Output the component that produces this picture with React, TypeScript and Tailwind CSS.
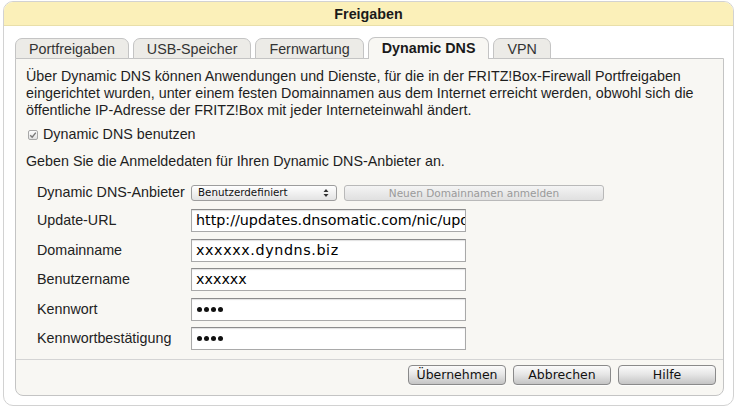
import React from "react";

const sans = { fontFamily: '"Liberation Sans", Arial, Helvetica, sans-serif' };
const lucida = { fontFamily: '"DejaVu Sans", Verdana, sans-serif' };

function Tab({ label, active }: { label: string; active?: boolean }) {
  return (
    <div
      className={
        active
          ? "relative z-10 h-[22px] px-[13px] border border-b-0 border-[#c4c4c4] rounded-t-[7px] bg-[#f8f7f3] text-[14.3px] leading-[21px] font-bold text-[#1a1a1a]"
          : "h-[21px] px-[13px] border border-[#c4c4c4] rounded-t-[7px] bg-[#ecebe7] text-[14.3px] leading-[20px] text-[#333]"
      }
    >
      {label}
    </div>
  );
}

function Row({ label, children }: { label: string; children: React.ReactNode }) {
  return (
    <div className="flex items-center">
      <div className="w-[154px] text-[14.3px] text-[#222]">{label}</div>
      {children}
    </div>
  );
}

function TextInput({ children }: { children: React.ReactNode }) {
  return (
    <div
      className="w-[275px] h-[23px] border border-[#a9a9a9] border-t-[#8c8c8c] bg-white shadow-[inset_0_1px_1px_rgba(0,0,0,0.12)] overflow-hidden whitespace-nowrap pl-[4px] text-[14.3px] leading-[21px] text-black"
      style={lucida}
    >
      {children}
    </div>
  );
}

function Dots() {
  return (
    <div className="w-[275px] h-[23px] border border-[#a9a9a9] border-t-[#8c8c8c] bg-white shadow-[inset_0_1px_1px_rgba(0,0,0,0.12)] flex items-center gap-[2px] pl-[5px]">
      {[0, 1, 2, 3].map((i) => (
        <span key={i} className="w-[5px] h-[5px] rounded-full bg-[#111]" />
      ))}
    </div>
  );
}

function Btn({ label }: { label: string }) {
  return (
    <div
      className="w-[98px] h-[20px] border border-[#8a8a8a] rounded-[4px] bg-gradient-to-b from-[#fbfbfb] via-[#e4e4e4] to-[#c4c4c4] text-center text-[12.5px] leading-[18px] text-[#111] shadow-[0_1px_0_rgba(255,255,255,0.8)]"
      style={lucida}
    >
      {label}
    </div>
  );
}

export default function App() {
  return (
    <div className="w-[737px] h-[411px] bg-white pt-[1px] pl-[3px]" style={sans}>
      <div className="w-[731px] h-[405px] border border-[#d2d2d2] rounded-[10px] overflow-hidden bg-white">
        <div className="h-[24px] bg-[#fbf0b9] border-b border-[#e9dfa9] text-center text-[14.3px] leading-[24px] font-bold text-[#1a1a1a]">
          Freigaben
        </div>
        <div className="pl-[11px] pr-[9px] pt-[11px]">
          <div className="flex items-end gap-[4px] -mb-px">
            <Tab label="Portfreigaben" />
            <Tab label="USB-Speicher" />
            <Tab label="Fernwartung" />
            <Tab label="Dynamic DNS" active />
            <Tab label="VPN" />
          </div>
          <div className="h-[338px] border border-[#c4c4c4] rounded-b-[8px] bg-[#f8f7f3] flex flex-col">
            <div className="px-[10px] pt-[9px]">
              <p className="text-[14.3px] leading-[17px] text-[#1e1e1e] whitespace-nowrap">
                Über Dynamic DNS können Anwendungen und Dienste, für die in der FRITZ!Box-Firewall Portfreigaben
                <br />
                eingerichtet wurden, unter einem festen Domainnamen aus dem Internet erreicht werden, obwohl sich die
                <br />
                öffentliche IP-Adresse der FRITZ!Box mit jeder Interneteinwahl ändert.
              </p>
              <div className="flex items-center mt-[7px] h-[17px] pl-[2px]">
                <div className="w-[10px] h-[10px] border border-[#a8a8a8] rounded-[2px] bg-gradient-to-b from-[#fdfdfd] to-[#e2e2e2] flex items-center justify-center">
                  <svg width="8" height="8" viewBox="0 0 8 8">
                    <path d="M1.2 4.2 L3.2 6.2 L6.8 1.6" fill="none" stroke="#7a7a7a" strokeWidth="1.4" />
                  </svg>
                </div>
                <span className="ml-[5px] text-[14.3px] text-[#1e1e1e]">Dynamic DNS benutzen</span>
              </div>
              <p className="mt-[10px] text-[14.3px] leading-[17px] text-[#1e1e1e]">
                Geben Sie die Anmeldedaten für Ihren Dynamic DNS-Anbieter an.
              </p>
              <div className="pl-[11px] mt-[12px] flex flex-col">
                <Row label="Dynamic DNS-Anbieter">
                  <div className="flex items-center gap-[7px]">
                    <div
                      className="w-[146px] h-[16px] border border-[#9d9d9d] rounded-[3px] bg-gradient-to-b from-[#ffffff] to-[#e3e3e3] flex items-center justify-between pl-[6px] pr-[7px] text-[10.3px] text-[#111]"
                      style={lucida}
                    >
                      <span>Benutzerdefiniert</span>
                      <svg width="6" height="10" viewBox="0 0 6 10">
                        <path d="M0.5 4 L3 1 L5.5 4 Z M0.5 6 L3 9 L5.5 6 Z" fill="#333" />
                      </svg>
                    </div>
                    <div
                      className="w-[260px] h-[16px] border border-[#b9b9b9] rounded-[3px] bg-gradient-to-b from-[#f4f4f4] to-[#e0e0e0] text-center text-[10.5px] leading-[14px] text-[#9a9a9a]"
                      style={lucida}
                    >
                      Neuen Domainnamen anmelden
                    </div>
                  </div>
                </Row>
                <div className="mt-[6px] flex flex-col gap-[6.5px]">
                  <Row label="Update-URL">
                    <TextInput>http://updates.dnsomatic.com/nic/update</TextInput>
                  </Row>
                  <Row label="Domainname">
                    <TextInput>
                      <span className="tracking-[0.6px]">xxxxxx.dyndns.biz</span>
                    </TextInput>
                  </Row>
                  <Row label="Benutzername">
                    <TextInput>xxxxxx</TextInput>
                  </Row>
                  <Row label="Kennwort">
                    <Dots />
                  </Row>
                  <Row label="Kennwortbestätigung">
                    <Dots />
                  </Row>
                </div>
              </div>
            </div>
            <div className="mt-auto h-[36px] border-t border-[#d4d4d4] flex justify-end items-start pt-[5px] pr-[7px] gap-[7px]">
              <Btn label="Übernehmen" />
              <Btn label="Abbrechen" />
              <Btn label="Hilfe" />
            </div>
          </div>
        </div>
      </div>
    </div>
  );
}
